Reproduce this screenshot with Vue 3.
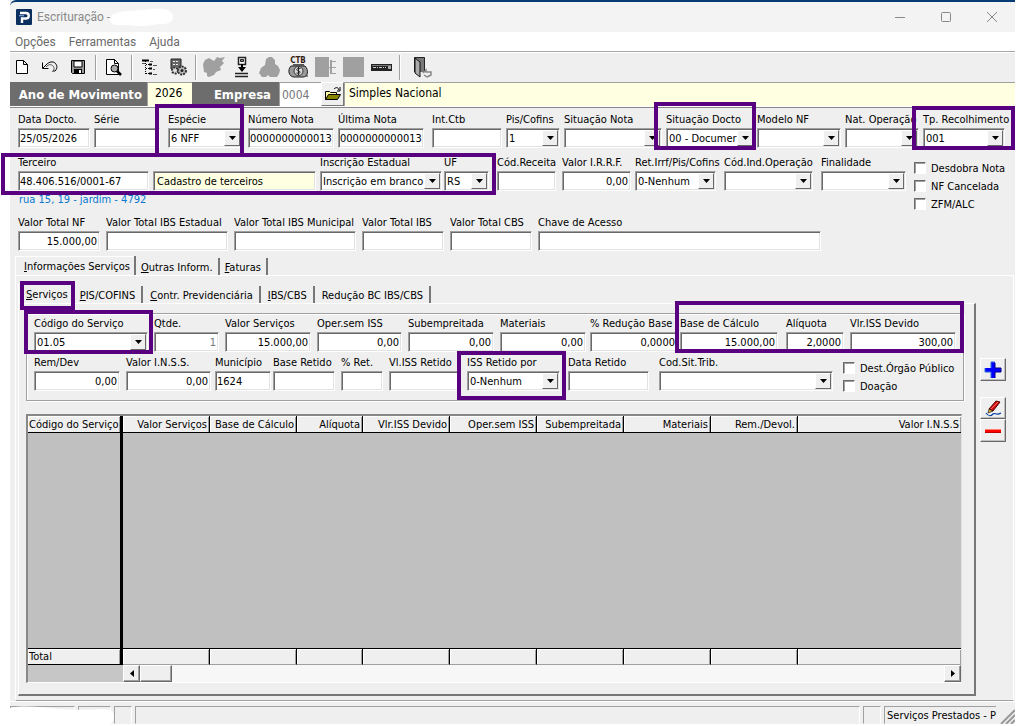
<script setup>
import { h } from 'vue'

const text = (label, width, value = '', extra = {}) => ({ kind: 'text', label, width, value, gap: 6, ...extra })
const combo = (label, width, value = '', extra = {}) => ({ kind: 'combo', label, width, value, gap: 4, ...extra })
const checks = (width, items) => ({ kind: 'checks', width, items, gap: 0 })

const documentRow = [
  {
    fields: [
      text('Data Docto.', 76, '25/05/2026', { gap: 4 }),
      text('Série', 74, '', { gap: 8 }),
      combo('Espécie', 80, '6 NFF', { gap: 6, mark: 'mark-kind' }),
      text('Número Nota', 90, '0000000000013', { gap: 4 }),
      text('Última Nota', 94, '0000000000013', { gap: 8 }),
      text('Int.Ctb', 74, '', { gap: 4 }),
      combo('Pis/Cofins', 58, '1'),
      combo('Situação Nota', 102),
      combo('Situação Docto', 91, '00 - Documer', { gap: 2, mark: 'mark-status' }),
      combo('Modelo NF', 88),
      combo('Nat. Operação', 78),
      combo('Tp. Recolhimento', 82, '001', { gap: 0, mark: 'mark-payment' }),
    ],
  },
]

const partyRow = [
  {
    mark: 'mark-party',
    note: 'rua 15, 19 - jardim - 4792',
    fields: [
      text('Terceiro', 135, '48.406.516/0001-67', { gap: 4 }),
      text('', 167, 'Cadastro de terceiros', { gap: 4, tone: 'cream', aria: 'Nome do terceiro' }),
      combo('Inscrição Estadual', 124, 'Inscrição em branco', { gap: 2 }),
      combo('UF', 53, 'RS', { gap: 8 }),
    ],
  },
  {
    fields: [
      text('Cód.Receita', 65),
      text('Valor I.R.R.F.', 73, '0,00', { gap: 4, tone: 'right' }),
      combo('Ret.Irrf/Pis/Cofins', 89, '0-Nenhum', { gap: 8 }),
      combo('Cód.Ind.Operação', 97, '', { gap: 8 }),
      combo('Finalidade', 93, '', { gap: 8 }),
      checks(91, ['Desdobra Nota', 'NF Cancelada', 'ZFM/ALC']),
    ],
  },
]

const totalsRow = [
  {
    fields: [
      text('Valor Total NF', 88, '15.000,00', { tone: 'right' }),
      text('Valor Total IBS Estadual', 128),
      text('Valor Total IBS Municipal', 128),
      text('Valor Total IBS', 88),
      text('Valor Total CBS', 88),
      text('Chave de Acesso', 289),
    ],
  },
  { fields: [{ kind: 'blank', width: 178, gap: 0 }] },
]

const serviceRow = [
  {
    fields: [
      combo('Código do Serviço', 120, '01.05', { gap: 6, mark: 'mark-service' }),
      text('Qtde.', 71, '1', { tone: 'right muted' }),
      text('Valor Serviços', 92, '15.000,00', { tone: 'right' }),
      text('Oper.sem ISS', 91, '0,00', { tone: 'right' }),
      text('Subempreitada', 92, '0,00', { tone: 'right' }),
      text('Materiais', 90, '0,00', { tone: 'right', gap: 4 }),
      text('% Redução Base', 90, '0,0000', { tone: 'right', gap: 2 }),
    ],
  },
  {
    mark: 'mark-base',
    fields: [
      text('Base de Cálculo', 106, '15.000,00', { tone: 'right', gap: 8 }),
      text('Alíquota', 64, '2,0000', { tone: 'right' }),
      text('Vlr.ISS Devido', 106, '300,00', { tone: 'right', gap: 0 }),
    ],
  },
]

const retentionRow = [
  {
    fields: [
      text('Rem/Dev', 92, '0,00', { tone: 'right' }),
      text('Valor I.N.S.S.', 89, '0,00', { tone: 'right', gap: 4 }),
      text('Município', 58, '1624', { gap: 2 }),
      text('Base Retido', 68),
      text('% Ret.', 48),
      text('Vl.ISS Retido', 78),
      combo('ISS Retido por', 101, '0-Nenhum', { gap: 8, mark: 'mark-holder' }),
      text('Data Retido', 91, '', { gap: 10 }),
      combo('Cod.Sit.Trib.', 184, '', { gap: 10 }),
      checks(113, ['Dest.Órgão Público', 'Doação']),
    ],
  },
]

const slug = (s) => s.normalize('NFD').replace(/[^a-zA-Z0-9]+/g, '-').toLowerCase()

function control(f, id) {
  if (f.kind === 'combo') {
    return h('span', { class: 'combo' }, [
      h('select', { id }, [h('option', f.value)]),
      h('span', { class: 'arrow', 'aria-hidden': 'true' }, [
        h('svg', { viewBox: '0 0 7 4', width: 7, height: 4 }, [h('path', { d: 'M0 0h7L3.5 4z' })]),
      ]),
    ])
  }
  return h('input', { id, type: 'text', value: f.value, class: ['box', f.tone], 'aria-label': f.aria })
}

function field(f) {
  if (f.kind === 'blank') return h('div')
  if (f.kind === 'checks') {
    return h('div', { class: 'checks' }, f.items.map((item) =>
      h('label', { class: 'check' }, [h('input', { type: 'checkbox' }), h('span', item)])))
  }
  const id = 'f-' + slug(f.label || f.aria)
  return h('div', { class: ['field', 'gap-' + f.gap, f.mark] }, [
    h('label', { for: id }, f.label),
    control(f, id),
  ])
}

const FieldRow = (props) => h('div', { class: 'row' }, props.segments.map((seg) => {
  const total = seg.fields.reduce((sum, f) => sum + f.width, 0)
  const columns = seg.fields.map((f) => `minmax(0, ${f.width}fr)`).join(' ')
  return h('div', { class: 'segment', style: { flexGrow: total } }, [
    h('div', { class: ['cells', seg.mark], style: { gridTemplateColumns: columns } }, seg.fields.map(field)),
    seg.note ? h('p', { class: 'note' }, seg.note) : null,
  ])
}))
FieldRow.props = ['segments']

const columns = ['Valor Serviços', 'Base de Cálculo', 'Alíquota', 'Vlr.ISS Devido', 'Oper.sem ISS', 'Subempreitada', 'Materiais', 'Rem./Devol.', 'Valor I.N.S.S']
</script>

<template>
  <div class="desktop">
    <div class="window">
      <header class="titlebar">
        <svg class="logo" viewBox="0 0 16 16" width="16" height="16" aria-hidden="true">
          <rect width="16" height="16" rx="1" fill="#0b2f5e" />
          <path d="M4 4h6a2.500 2.500 0 0 1 0 5.500H6V14" fill="none" stroke="#fff" stroke-width="2.400" />
          <path d="M3 6.700h5" stroke="#7fa6d8" stroke-width="1.200" />
        </svg>
        <h1>Escrituração -</h1>
        <svg class="smudge" viewBox="0 0 64 19" width="64" height="19" aria-hidden="true">
          <path d="M6 5C14 2 30 3 42 1c12-1 20 1 21 7s-6 9-16 8c-8 3-20 2-30 1C8 18 0 17 0 12c0-4 2-6 6-7z" fill="#fff" />
        </svg>
        <div class="window-buttons">
          <button type="button" aria-label="Minimizar"><svg viewBox="0 0 12 12" width="12" height="12"><path d="M1 6.500h10" /></svg></button>
          <button type="button" aria-label="Maximizar"><svg viewBox="0 0 12 12" width="12" height="12"><rect x="1.500" y="1.500" width="9" height="9" rx="1" /></svg></button>
          <button type="button" aria-label="Fechar"><svg viewBox="0 0 12 12" width="12" height="12"><path d="M1 1l10 10M11 1L1 11" /></svg></button>
        </div>
      </header>

      <nav class="menu">
        <a href="#">Opções</a>
        <a href="#">Ferramentas</a>
        <a href="#">Ajuda</a>
      </nav>

      <div class="toolbar">
        <button type="button" aria-label="Novo">
          <svg viewBox="0 0 24 24"><path d="M5.500 5.500h7l4 4v9h-11zM12.500 5.500v4h4" fill="#fff" stroke="#000" /></svg>
        </button>
        <button type="button" aria-label="Desfazer">
          <svg viewBox="0 0 24 24"><path d="M4.500 7.500v6h6" fill="none" stroke="#000" /><path d="M5 13l4-4c2-2 6-3 8-1s3 5 0 8h-2" fill="none" stroke="#000" /><path d="M8 12c3-3 5-3 7-1s1 4-1 6" fill="none" stroke="#555" /></svg>
        </button>
        <button type="button" aria-label="Salvar">
          <svg viewBox="0 0 24 24"><path d="M5.500 5.500h13v13h-12l-1-1z" fill="#999" stroke="#000" /><path d="M8 6h8v6H8z" fill="#fff" stroke="#000" /><path d="M8 14h8v5H8z" fill="#000" /><path d="M13 15h2v3h-2z" fill="#fff" /></svg>
        </button>
        <i class="sep"></i>
        <button type="button" aria-label="Visualizar">
          <svg viewBox="0 0 24 24"><path d="M4.500 4.500h8l4 4v11h-12zM12.500 4.500v4h4" fill="#fff" stroke="#000" /><circle cx="12.500" cy="13.500" r="3.500" fill="#aaa" stroke="#000" /><path d="M15 16l4 4" stroke="#000" stroke-width="2.500" /></svg>
        </button>
        <i class="sep"></i>
        <button type="button" aria-label="Plano de contas">
          <svg viewBox="0 0 24 24"><path d="M7.500 6v13M8 9.500h3M8 13.500h3M8 18.500h3" fill="none" stroke="#000" stroke-dasharray="1 1" /><path d="M4 5.500h7M11 9.500h3M11 13.500h3M11 18.500h3" stroke="#000" stroke-width="2" /><path d="M12 6.500h3M15 10.500h4M15 14.500h2M15 19.500h4M4 8.500h3" stroke="#555" /></svg>
        </button>
        <button type="button" aria-label="Processar">
          <svg viewBox="0 0 24 24"><path d="M5 4h10v10H5z" fill="#666" stroke="#222" /><path d="M7 6.500h6M7 9.500h6M7 12.500h6" stroke="#eee" stroke-dasharray="2 1" /><circle cx="9" cy="15.500" r="3" fill="#ddd" stroke="#333" stroke-width="2" stroke-dasharray="2 1" /><circle cx="16" cy="15.500" r="4" fill="#bbb" stroke="#333" stroke-width="2" stroke-dasharray="2 1" /><circle cx="16" cy="15.500" r="1.500" fill="#222" /></svg>
        </button>
        <i class="sep"></i>
        <button type="button" aria-label="Conferir" disabled>
          <svg viewBox="0 0 24 24"><path d="M1 9l2-4 4-2 5 3 3-4 3 1 5-1-3 4 2 2-4 4 1 3-5 2-2 3-5 2-2-1v-3l-3-1z" fill="#a0a0a0" /></svg>
        </button>
        <button type="button" aria-label="Importar">
          <svg viewBox="0 0 24 24"><path d="M8.500 2.500h7v7h-7z" fill="#fff" stroke="#222" stroke-width="1.500" /><path d="M10.500 4.500h3v2h-3z" fill="#888" stroke="#222" /><path d="M12 9v7" stroke="#000" stroke-width="2" /><path d="M8 12h8l-4 5z" fill="#000" /><path d="M5 18.500h13M5 21.500h13" stroke="#222" stroke-width="1.500" /></svg>
        </button>
        <button type="button" aria-label="Agrupar" disabled>
          <svg viewBox="0 0 24 24"><path d="M8 4l3-2h3l3 3v4l3 2 2 4-1 4-2 3H12l-2-2-2 2H4l-3-4 2-5 4-3z" fill="#a0a0a0" /></svg>
        </button>
        <button type="button" aria-label="CTB">
          <svg viewBox="0 0 24 24"><path d="M5 11C1 15 3 22 8 22h9c5 0 6-7 2-11z" fill="#999" stroke="#222" /><circle cx="12.500" cy="16" r="4.500" fill="#ddd" stroke="#333" /><path d="M7 9h11v2H7z" fill="#555" /><path d="M14.500 13.500c-4-1-5 2-2 2.500s2 3-2 2M12.500 12v8M20 21h2" stroke="#222" fill="none" /><text x="12" y="8" text-anchor="middle" font-size="8" font-weight="bold" fill="#351d12">CTB</text></svg>
        </button>
        <button type="button" aria-label="Lançar" disabled>
          <svg viewBox="0 0 24 24"><path d="M1 2h14v20H1zM16 5h2v14h-2zM18 6h4v1h-4zM18 12h4v1h-4zM18 18h4v1h-4zM14 12h4v1h-4z" fill="#a0a0a0" /></svg>
        </button>
        <button type="button" aria-label="Quadro" disabled>
          <svg viewBox="0 0 24 24"><path d="M1 2h21v20H1z" fill="#a0a0a0" /></svg>
        </button>
        <button type="button" aria-label="Código de barras">
          <svg viewBox="0 0 24 24"><path d="M1 9h21v7H1z" fill="#222" /><path d="M3 12.500h13" stroke="#ccc" stroke-dasharray="3 1 1 1" /><path d="M18 12.500h3" stroke="#aaa" stroke-width="3" /><path d="M2 10.500h19" stroke="#777" /></svg>
        </button>
        <i class="sep"></i>
        <button type="button" class="exit" aria-label="Sair">
          <svg viewBox="0 0 24 24"><path d="M3.500 17V2.500h10V17" fill="#777" stroke="#222" /><path d="M4 3l5 4v15l-5-4z" fill="#aaa" stroke="#111" /><path d="M12 18l3-3v2h5v3l-4 2M13 20l3 2" fill="none" stroke="#888" stroke-width="1.500" /></svg>
        </button>
      </div>

      <div class="company">
        <label for="year">Ano de Movimento</label>
        <input id="year" class="year" type="text" value="2026">
        <label for="company" class="company-label">Empresa</label>
        <input id="company" class="code" type="text" value="0004">
        <button type="button" class="open" aria-label="Abrir empresa">
          <svg viewBox="0 0 18 16" width="18" height="16"><path d="M1.500 13.500v-8h4l1 1h6v3" fill="#ffffa0" stroke="#000" /><path d="M1.500 13.500l3-5h12l-3 5z" fill="#858500" stroke="#000" /><path d="M10 3c2-2 4-2 5 1M16 1v4h-3" fill="none" stroke="#000" /></svg>
        </button>
        <input class="company-name" type="text" value="Simples Nacional" aria-label="Nome da empresa">
      </div>

      <main class="form">
        <div class="head-rows">
          <FieldRow class="document" :segments="documentRow" />
          <FieldRow class="party" :segments="partyRow" />
          <FieldRow class="totals" :segments="totalsRow" />
        </div>

        <div class="tabs outer-tabs">
          <button type="button" class="tab active"><u>I</u>nformações Serviços</button>
          <button type="button" class="tab"><u>O</u>utras Inform.</button>
          <button type="button" class="tab"><u>F</u>aturas</button>
        </div>

        <section class="outer-panel">
          <div class="work">
            <div class="tabs inner-tabs">
              <button type="button" class="tab active mark-tab"><u>S</u>erviços</button>
              <button type="button" class="tab"><u>P</u>IS/COFINS</button>
              <button type="button" class="tab"><u>C</u>ontr. Previdenciária</button>
              <button type="button" class="tab"><u>I</u>BS/CBS</button>
              <button type="button" class="tab">Redução BC IBS/CBS</button>
            </div>
            <div class="inner-panel">
              <div class="group">
                <FieldRow class="service" :segments="serviceRow" />
                <FieldRow class="retention" :segments="retentionRow" />
              </div>

              <div class="grid-frame">
                <table>
                  <colgroup>
                    <col class="c-code"><col class="c-mid"><col class="c-mid"><col class="c-rate">
                    <col class="c-mid"><col class="c-mid"><col class="c-mid"><col class="c-mid"><col class="c-mid"><col>
                  </colgroup>
                  <thead>
                    <tr><th class="code-col">Código do Serviço</th><th v-for="c in columns" :key="c">{{ c }}</th></tr>
                  </thead>
                  <tbody>
                    <tr><td class="code-col"></td><td :colspan="columns.length"></td></tr>
                  </tbody>
                  <tfoot>
                    <tr><td class="code-col">Total</td><td v-for="c in columns" :key="c"></td></tr>
                  </tfoot>
                </table>
                <div class="scroll">
                  <button type="button" class="scroll-button" aria-label="Rolar para a esquerda"><svg viewBox="0 0 4 7" width="4" height="7"><path d="M4 0v7L0 3.500z" /></svg></button>
                  <span class="thumb"></span>
                  <span class="track"></span>
                  <button type="button" class="scroll-button" aria-label="Rolar para a direita"><svg viewBox="0 0 4 7" width="4" height="7"><path d="M0 0v7l4-3.500z" /></svg></button>
                </div>
              </div>
            </div>
          </div>

          <aside class="actions">
            <button type="button" aria-label="Adicionar">
              <svg viewBox="0 0 18 18" width="18" height="18"><path d="M7 1h4v6h6v4h-6v6H7v-6H1V7h6z" fill="#00f" /><path d="M7 17V11H1V7M7 7V1h4" fill="none" stroke="#2d6fd8" /><path d="M11 2v5h6v4h-6v6" fill="none" stroke="#000080" /></svg>
            </button>
            <button type="button" class="edit" aria-label="Editar">
              <svg viewBox="0 0 18 18" width="18" height="18"><path d="M5 10l7-8 4 1-7 9z" fill="#d01010" stroke="#500" /><path d="M7 10l7-7" stroke="#f66" /><path d="M5 10l4 2-5 2z" fill="#e0b040" stroke="#000" stroke-width=".6" /><path d="M2 14c3 4 5 3 7 1s3 2 8-1" fill="none" stroke="#003a9c" stroke-width="1.200" /></svg>
            </button>
            <button type="button" aria-label="Remover">
              <svg viewBox="0 0 18 18" width="18" height="18"><path d="M1 7h16v4H1z" fill="#f00" /><path d="M1 7.500h16" stroke="#ff8070" /><path d="M1 10.500h16" stroke="#c00000" /></svg>
            </button>
          </aside>
        </section>
      </main>

      <footer class="status">
        <span class="s-a"></span><span class="s-b"></span><span class="s-c"></span>
        <span class="s-main"></span><span class="s-c"></span>
        <span class="s-text">Serviços Prestados - P</span>
        <svg class="grip" viewBox="0 0 16 16" width="16" height="16" aria-hidden="true"><path d="M2 16L16 2M7 16l9-9M12 16l4-4" stroke="#999" stroke-width="2" /></svg>
        <svg class="status-smudge" viewBox="0 0 104 18" width="104" height="18" aria-hidden="true"><path d="M0 2c14-3 32-1 48 1 18 1 32 1 46 0 8 0 10 3 10 8s-3 6-4 7H0z" fill="#fff" /></svg>
      </footer>
    </div>
  </div>
</template>

<style>
body { background: #fff; }
</style>

<style scoped>
.desktop {
  box-sizing: border-box;
  min-height: 100vh;
  padding: 0 1px 2px 10px;
  display: flex;
  font-family: "DejaVu Sans Condensed", "Noto Sans", sans-serif;
  font-size: 11px;
  color: #000;
}
.desktop :deep(*) { box-sizing: border-box; }
.desktop :deep(button), .desktop :deep(input), .desktop :deep(select) {
  font: inherit; color: inherit; margin: 0; border-radius: 0;
}
.window { flex: 1; min-width: 0; background: #efefef; display: flex; flex-direction: column; }

.titlebar {
  height: 32px; padding: 0 0 0 6px; border-top: 2px solid #063a74; background: #f3f3f3;
  border-top-left-radius: 6px; display: flex; align-items: center;
}
.titlebar h1 { margin: 0 0 0 5px; font: 12px/16px Roboto, sans-serif; color: #8a8a8a; white-space: nowrap; }
.window-buttons { margin-left: auto; display: flex; }
.window-buttons button { width: 46px; height: 28px; padding: 0; border: 0; background: none; display: flex; align-items: center; justify-content: center; }
.window-buttons svg { fill: none; stroke: #888; }
.menu { height: 19px; padding: 0 5px; background: #fff; display: flex; gap: 13px; }
.menu a { font: 12px/20px Roboto, sans-serif; color: #6a6a6a; text-decoration: none; }

.toolbar { height: 31px; border-top: 1px solid #a8a8a8; box-shadow: inset 0 1px #fff; display: flex; align-items: center; }
.toolbar button { width: 28px; height: 28px; padding: 2px; border: 0; background: none; }
.toolbar button:first-child { width: 26px; padding: 2px 1px; }
.toolbar svg { display: block; width: 24px; height: 24px; }
.sep { width: 2px; height: 25px; margin: 0 3px; border-left: 1px solid #a0a0a0; border-right: 1px solid #fff; }
.toolbar .exit { margin-left: 5px; }

.company { height: 24px; background: #6d6d6d; display: flex; align-items: stretch; font-size: 13px; }
.company label { width: 137px; padding: 0 5px 0 0; color: #fff; font-size: 13px; font-weight: bold; line-height: 25px; text-align: right; white-space: nowrap; }
.company input { border: 1px solid #a0a0a0; border-width: 1px 0 0 1px; padding: 0 0 3px 7px; background: #ffffe1; font-size: 12px; }
.company .year { width: 45px; }
.company .company-label { width: 87px; padding-right: 8px; }
.company .code { width: 42px; padding: 0 0 0 2px; background: #fff; color: #777; }
.open { width: 23px; padding: 0; border: 1px solid #888; border-color: #fff #777 #777 #fff; background: #efefef; display: flex; align-items: center; justify-content: center; }
.company .company-name { flex: 1; min-width: 0; padding-left: 4px; }

.form { flex: 1; display: flex; flex-direction: column; border-top: 1px solid #fff; box-shadow: inset 0 1px #888; }
.head-rows { padding: 4px 10px 0 8px; }
.window :deep(.row) { display: flex; align-items: flex-start; }
.window :deep(.segment) { flex: 1 1 0; min-width: 0; }
.window :deep(.cells) { display: grid; position: relative; align-items: start; }
.window :deep(.field) { position: relative; min-width: 0; }
.window :deep(.gap-2) { padding-right: 2px; }
.window :deep(.gap-4) { padding-right: 4px; }
.window :deep(.gap-6) { padding-right: 6px; }
.window :deep(.gap-8) { padding-right: 8px; }
.window :deep(.gap-10) { padding-right: 10px; }
.window :deep(.field > label) { display: block; height: 17px; line-height: 17px; white-space: nowrap; }
.window :deep(.box), .window :deep(.combo) {
  display: block; width: 100%; height: 20px; background: #fff;
  border: 1px solid; border-color: #a0a0a0 #fff #fff #a0a0a0;
  box-shadow: inset 1px 1px #696969, inset -1px -1px #e3e3e3;
}
.window :deep(.box) { padding: 0 0 0 1px; outline: 0; }
.window :deep(.right) { padding-right: 2px; text-align: right; }
.window :deep(.muted) { color: #777; }
.window :deep(.cream) { background: #ffffe1; padding-left: 3px; }
.window :deep(.combo) { position: relative; }
.window :deep(select) { display: block; width: 100%; height: 18px; padding: 0 15px 0 2px; border: 0; background: none; appearance: none; outline: 0; }
.window :deep(.arrow) {
  position: absolute; top: 1px; right: 1px; width: 16px; height: 16px; background: #efefef; pointer-events: none;
  border: 1px solid; border-color: #fff #696969 #696969 #fff; display: flex; align-items: center; justify-content: center;
}
.window :deep(.note) { margin: 2px 0 0 1px; line-height: 14px; color: #0a78d0; }
.window :deep(.checks) { padding-top: 5px; }
.window :deep(.check) { display: flex; align-items: center; height: 18px; gap: 5px; white-space: nowrap; }
.window :deep(.check input) {
  appearance: none; flex: none; width: 12px; height: 12px; background: #fff;
  border: 1px solid; border-color: #696969 #fff #fff #696969; box-shadow: inset 1px 1px #a0a0a0;
}
.party { margin-top: 6px; }
.totals { margin-top: 1px; }
.retention { margin-top: 2px; }

.window :deep([class*="mark-"]::after) { content: ""; position: absolute; z-index: 2; border: 4px solid #590080; pointer-events: none; }
.window :deep(.mark-kind::after) { inset: -7px 4px -9px -13px; }
.window :deep(.mark-status::after) { inset: -9px 1px -2px -12px; }
.window :deep(.mark-payment::after) { inset: -5px -10px -2px -11px; }
.window :deep(.mark-party::after) { inset: -1px 1px -4px -17px; }
.window :deep(.mark-service::after) { inset: -5px 1px -2px -10px; }
.window :deep(.mark-base::after) { inset: -14px -8px -1px -5px; }
.window :deep(.mark-holder::after) { inset: -3px 2px -9px -10px; }
.window :deep(.mark-tab::after) { inset: -3px -2px -7px 2px; }

.tabs { display: flex; align-items: flex-end; }
.tab { position: relative; height: 17px; padding: 2px 5px 0; border: 0; border-right: 2px solid #777; background: none; line-height: 15px; white-space: nowrap; }
.outer-tabs { margin: 5px 0 0 5px; }
.outer-tabs .tab.active { height: 19px; padding: 2px 4px 0 9px; box-shadow: inset 1px 1px #fff; }
.inner-tabs .tab { padding: 2px 6px 0 7px; }
.inner-tabs .tab.active { height: 19px; padding: 2px 5px 0 8px; border: 0; box-shadow: inset 1px 1px #fff; }
.outer-panel { flex: 1; margin: 0 1px 0 5px; padding: 8px 7px 4px 2px; border: 1px solid #fff; border-bottom-color: #a0a0a0; display: flex; gap: 4px; }
.work { flex: 1; min-width: 0; display: flex; flex-direction: column; }
.inner-panel { flex: 1; padding: 9px 10px 11px 7px; border: 1px solid #fff; border-right: 2px solid #777; border-bottom: 2px solid #777; }
.group { margin-bottom: 13px; padding: 1px 7px 5px; border: 1px solid #a0a0a0; box-shadow: 1px 1px #fff, inset 1px 1px #fff; }
.grid-frame { margin-right: 2px; border: 2px solid #888; border-right: 1px solid #e3e3e3; border-bottom: 1px solid #fff; background: #c6c6c6; }
table { width: 100%; border-collapse: separate; border-spacing: 0; table-layout: fixed; }
.c-code { width: 95px; }
.c-mid { width: 87px; }
.c-rate { width: 66px; }
th, tfoot td { height: 17px; padding: 1px 2px 0; background: #efefef; border-right: 1px solid #000; border-bottom: 1px solid #000; box-shadow: inset 1px 1px #fff, inset -1px 0 #a0a0a0; font-weight: normal; line-height: 14px; text-align: right; white-space: nowrap; }
tfoot td { border-top: 1px solid #000; border-bottom: 1px solid #a0a0a0; }
tbody td { height: 215px; padding: 0; background: #c0c0c0; }
th.code-col, td.code-col { padding-left: 1px; padding-right: 0; border-right: 3px solid #000; text-align: left; }
tfoot td.code-col { border-bottom: 1px solid #000; }
th:last-child, tfoot td:last-child { border-right: 0; }
.scroll { height: 17px; margin-left: 95px; display: flex; background: #f7f7f7; }
.scroll-button, .thumb { border: 1px solid; border-color: #fff #696969 #696969 #fff; background: #efefef; box-shadow: inset -1px -1px #a0a0a0; }
.scroll-button { width: 17px; padding: 0; display: flex; align-items: center; justify-content: center; }
.thumb { width: 32px; }
.track { flex: 1; }
.actions { width: 26px; padding-top: 74px; }
.actions button { display: flex; align-items: center; justify-content: center; width: 26px; height: 23px; padding: 0; border: 1px solid; border-color: #fff #696969 #696969 #fff; background: #efefef; box-shadow: inset -1px -1px #c0c0c0; }
.actions .edit { margin-top: 16px; height: 22px; }

.status { position: relative; height: 23px; padding-top: 4px; border-top: 1px solid #fff; display: flex; gap: 3px; }
.status span { border: 1px solid; border-color: #a0a0a0 #fff transparent #a0a0a0; }
.s-a { width: 65px; }
.s-b { width: 33px; }
.s-c { width: 18px; }
.s-main { flex: 1; }
.s-text { width: 112px; padding-left: 2px; line-height: 18px; white-space: nowrap; }
.status .s-text { border-right: 0; }
.grip { align-self: flex-end; }
.status-smudge { position: absolute; left: 0; bottom: 0; }
</style>
